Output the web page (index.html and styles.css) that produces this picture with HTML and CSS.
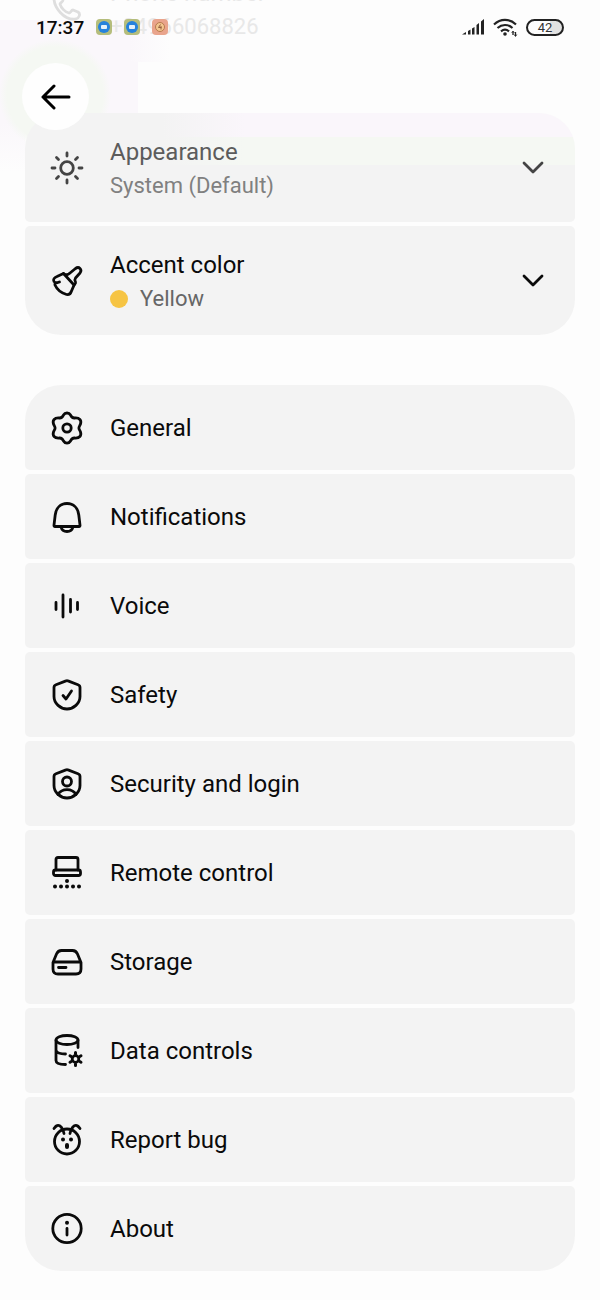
FILE: index.html
```html
<!doctype html>
<html lang="en">
<head>
<meta charset="utf-8">
<meta name="viewport" content="width=device-width, initial-scale=1">
<title>Settings</title>
<link rel="stylesheet" href="styles.css">
</head>

<body>
	<header class="topbar">
		<div class="status">
			<span class="time">17:37</span>
			<span class="apps">
				<svg width="16" height="16" viewBox="0 0 16 16"><rect width="16" height="16" rx="4" fill="#b5bd7c"/><circle cx="8" cy="8" r="6" fill="#2582dc"/><rect x="5" y="6" width="6" height="4" rx="1" fill="#e4f1fb"/></svg>
				<svg width="16" height="16" viewBox="0 0 16 16"><rect width="16" height="16" rx="4" fill="#b5bd7c"/><circle cx="8" cy="8" r="6" fill="#2582dc"/><rect x="5" y="6" width="6" height="4" rx="1" fill="#e4f1fb"/></svg>
				<svg width="16" height="16" viewBox="0 0 16 16"><rect width="16" height="16" rx="4" fill="#e9a48c"/><circle cx="8" cy="8" r="4.500" fill="#f3c58f" stroke="#b77a4d"/><path d="M8.500 5.500 6.500 8.500h3M9 7v3.500" fill="none" stroke="#95603f"/></svg>
			</span>
			<span class="signals">
				<svg width="24" height="18" viewBox="0 0 24 18" fill="#222"><path d="M1 16.500 5 14v2.500zM7 13l2.500-1.500v5H7zM11 10.500l2.500-1.500v7.500H11zM15.500 7l2.500-2v11.500h-2.500zM20 3.500 23 1v15.500h-3z"/></svg>
				<svg width="25" height="19" viewBox="0 0 25 19" fill="none" stroke="#222" stroke-width="2.200"><path d="M1 6.500C7.500.3 16.500.3 23 6.500M4.500 10c4.500-4 10.500-4 15 0M8 13.300c2.500-2 5.500-2 8 0"/><circle cx="12" cy="16" r="1.800" fill="#222" stroke="none"/><path d="M20 13.500v3.500M22.500 14v4" stroke-width="1.300"/><path d="m18.700 15 1.300-2 1.300 2M21.200 16.500l1.300 2 1.300-2" stroke-width=".8"/></svg>
				<span class="battery">42</span>
			</span>
		</div>
		<button class="back" aria-label="Back">
			<svg width="30" height="26" viewBox="0 0 30 26"><path d="M28 13H2M13 2 2 13l11 11"/></svg>
		</button>
	</header>

	<main class="settings">
		<section class="account">
			<svg class="icon" viewBox="0 0 32 32"><path d="M3 5c1-3 6-4 7-1l2 5c0 2-3 3-3 4 1 4 5 8 9 9 2 0 2-3 4-3l5 2c3 2 1 6-2 7C14 30 2 17 3 5z"/></svg>
			<div class="text">
				<span class="label">Phone number</span>
				<span class="value">+84966068826</span>
			</div>
		</section>

		<ul class="group">
			<li><button class="row tall fading">
				<svg class="icon" viewBox="0 0 32 32"><circle cx="16" cy="16" r="6.300"/><path d="M16 1v3M16 28v3M1 16h3M28 16h3M5.500 5.500l2 2M24.500 24.500l2 2M5.500 26.500l2-2M24.500 7.500l2-2"/></svg>
				<span class="text">
					<span class="label">Appearance</span>
					<span class="value">System (Default)</span>
				</span>
				<svg class="chevron" viewBox="0 0 22 14"><path d="m2 2 9 9 9-9"/></svg>
			</button></li>
			<li><button class="row tall">
				<svg class="icon" viewBox="0 0 32 32"><path d="M12.500 8.500c2 1.500 4.500 1.500 6.500-.5l5.500-4.500c3.500-2.500 7 1 4.500 4.500L24.500 13c-1 1.500-1 2.500 0 4 .6 1.200-.5 2-1.500 3.200L20.500 26c-1 3-2.500 4-5 3.500-5-1.500-9.500-5-11.500-9.500-.5-1.500.5-2 1.500-2.200L8.500 17c-2 .7-4.500 1-5.500-.5-1.200-2 .2-4 3-5z"/><path d="M12.500 8.500 23 20"/></svg>
				<span class="text">
					<span class="label">Accent color</span>
					<span class="value"><i class="dot"></i>Yellow</span>
				</span>
				<svg class="chevron" viewBox="0 0 22 14"><path d="m2 2 9 9 9-9"/></svg>
			</button></li>
		</ul>

		<ul class="group">
			<li><a class="row" href="#general">
				<svg class="icon" viewBox="0 0 32 32"><path d="M12.500 3c1.500-2.700 5.500-2.700 7 0 1 2.400 2.500 3.200 4.500 3 4.500-.3 6.700 2.300 5.500 6-.5 1.500-1.600 2.500-1.600 4s1.100 2.500 1.600 4c1.200 3.700-1 6.300-5.500 6-2-.2-3.500.6-4.500 3-1.500 2.700-5.500 2.700-7 0-1-2.400-2.500-3.200-4.500-3-4.500.3-6.700-2.300-5.500-6 .5-1.500 1.600-2.500 1.600-4S3 13.500 2.500 12C1.300 8.300 3.500 5.700 8 6c2 .2 3.500-.6 4.500-3z"/><circle cx="16" cy="16" r="4.200"/></svg>
				<span class="label">General</span>
			</a></li>
			<li><a class="row" href="#notifications">
				<svg class="icon" viewBox="0 0 32 32"><path d="M4 25.500c-.8 0-1.100-.5-1-1.300L4.200 14C5 7 9.500 2.500 16 2.500S27 7 27.800 14L29 24.200c.1.800-.2 1.300-1 1.300z"/><path d="M10 26c1.500 6 10.500 6 12 0"/></svg>
				<span class="label">Notifications</span>
			</a></li>
			<li><a class="row" href="#voice">
				<svg class="icon" viewBox="0 0 32 32"><path d="M5 12.500v7M12 5v22M19.500 9.500v12.500M26.500 12.500v7"/></svg>
				<span class="label">Voice</span>
			</a></li>
			<li><a class="row" href="#safety">
				<svg class="icon" viewBox="0 0 32 32"><path d="M15 1.900q1-.5 2 0l10 3.800Q29 6.500 29 8.500v9c0 7-6.500 12.500-13 12.500S3 24.500 3 17.500v-9q0-2 2-2.800z"/><path d="m12 16.500 3 3.500 5.500-8"/></svg>
				<span class="label">Safety</span>
			</a></li>
			<li><a class="row" href="#security">
				<svg class="icon" viewBox="0 0 32 32"><path d="M15 1.900q1-.5 2 0l10 3.800Q29 6.500 29 8.500v9c0 7-6.500 12.500-13 12.500S3 24.500 3 17.500v-9q0-2 2-2.800z"/><circle cx="16" cy="13.500" r="4.500"/><path d="M7 26.500c4-6.500 14-6.500 18 0"/></svg>
				<span class="label">Security and login</span>
			</a></li>
			<li><a class="row" href="#remote">
				<svg class="icon" viewBox="0 0 32 32"><path d="M5 13V2.500Q5 .5 7 .5h18q2 0 2 2V13"/><rect x="2.500" y="13" width="27" height="5.500" rx="2"/><path class="dots" d="M16 24h.01M4 29.500h.01M10 29.500h.01M16 29.500h.01M22 29.500h.01M28 29.500h.01"/></svg>
				<span class="label">Remote control</span>
			</a></li>
			<li><a class="row" href="#storage">
				<svg class="icon" viewBox="0 0 32 32"><path d="M2 16.500 5.500 8Q7 4.500 10.500 4.500h11q3.500 0 5 3.500L30 16.500V23q0 5-5 5H7q-5 0-5-5zM2.500 16h27M7.500 21.500H15"/></svg>
				<span class="label">Storage</span>
			</a></li>
			<li><a class="row" href="#data">
				<svg class="icon" viewBox="0 0 32 32"><ellipse cx="16" cy="5" rx="11" ry="4.500"/><path d="M5 5.500v20c0 2.500 4 4 9.500 4M27 5.500v7M5 15.500c1 2.500 5 3.500 9.500 3.500"/><circle cx="24.500" cy="24" r="3.300"/><path class="teeth" d="M24.500 19v-1.500M24.500 29v1.500M20.200 21.500l-1.200-.7M28.800 26.500l1.200.7M20.200 26.500l-1.200.7M28.800 21.500l1.200-.7"/></svg>
				<span class="label">Data controls</span>
			</a></li>
			<li><a class="row" href="#bug">
				<svg class="icon" viewBox="0 0 32 32"><circle cx="16" cy="17.500" r="12.500"/><path d="M13 9.500C12 4 9 1 6.500 1.500 5 1.700 4 3 3 4.500M19 9.500c1-5.500 4-8.500 6.500-8C27 1.700 28 3 29 4.500"/><path class="dots" d="M12 15.500h.01M20 15.500h.01M16 21v2"/></svg>
				<span class="label">Report bug</span>
			</a></li>
			<li><a class="row" href="#about">
				<svg class="icon" viewBox="0 0 32 32"><circle cx="16" cy="15.500" r="14.200"/><path d="M16 15.500v6.500"/><path class="dots" d="M16 9.700h.01"/></svg>
				<span class="label">About</span>
			</a></li>
		</ul>
	</main>
</body>
</html>
```
FILE: styles.css
```css
*{
	box-sizing:border-box;
	margin:0;
	padding:0;
}
body{
	position:relative;
	background:#fdfdfd;
	color:#0a0a0a;
	font-family:Roboto, "Liberation Sans", sans-serif;
	font-size:24px;
	overflow-x:hidden;
}
ul{
	list-style:none;
}
svg{
	display:block;
	flex:none;
}

/* status bar and back button float over the list */
.topbar{
	position:absolute;
	top:0;
	left:0;
	width:100%;
	padding:13px 36px 0 22px;
	z-index:1;
}
.status{
	display:flex;
	align-items:center;
	height:28px;
	padding-left:14px;
}
.time{
	font-size:19px;
	font-weight:500;
}
.apps{
	display:flex;
	gap:12px;
	margin-left:12px;
}
.signals{
	display:flex;
	align-items:center;
	gap:8px;
	margin-left:auto;
}
.battery{
	width:38px;
	height:17px;
	border:2px solid #222;
	border-radius:9px;
	background:linear-gradient(90deg, #fdfdfd 65%, #e2e2e2 65%);
	color:#333;
	font-size:13px;
	line-height:13px;
	text-align:center;
}
.back{
	display:flex;
	align-items:center;
	justify-content:center;
	width:67px;
	height:67px;
	margin-top:22px;
	border:0;
	border-radius:50%;
	background:#fefefe;
}
.back svg{
	fill:none;
	stroke:#000;
	stroke-width:3;
	stroke-linecap:round;
	stroke-linejoin:round;
}

.settings{
	padding:0 25px 30px;
	background:
		radial-gradient(circle at 55px 95px, #f5f8f3 48px, transparent 56px),
		linear-gradient(90deg, #faf7fb 130px, transparent 170px) 0 20px / 100% 42px no-repeat,
		linear-gradient(#faf7fb, #faf7fb) 0 62px / 138px 60px no-repeat,
		linear-gradient(#faf7fb, transparent) 0 122px / 25px 50px no-repeat;
}
.account{
	display:flex;
	align-items:flex-end;
	gap:27px;
	height:113px;
	padding:0 26px 70px;
	overflow:hidden;
	color:#e8e8e8;
}
.account .icon{
	margin-bottom:20px;
	stroke:#dedede;
}
.account .value{
	color:#e8e8e8;
}

.group{
	display:grid;
	gap:4px;
}
.group + .group{
	margin-top:50px;
}
.row{
	display:flex;
	align-items:center;
	gap:27px;
	width:100%;
	min-height:85px;
	padding:0 31px 0 26px;
	border:0;
	border-radius:5px;
	background:#f3f3f3;
	color:inherit;
	font:inherit;
	text-align:left;
	text-decoration:none;
}
.tall{
	min-height:109px;
}
.group li:first-child .row{
	border-top-left-radius:36px;
	border-top-right-radius:36px;
}
.group li:last-child .row{
	border-bottom-left-radius:36px;
	border-bottom-right-radius:36px;
}
.text{
	display:flex;
	flex-direction:column;
	flex:1;
	padding-top:2px;
}
.label{
	line-height:34px;
}
.value{
	display:flex;
	align-items:center;
	color:#666;
	font-size:22px;
	line-height:33px;
}
.dot{
	width:18px;
	height:18px;
	margin-right:12px;
	border-radius:50%;
	background:#f6c443;
}
.icon{
	width:32px;
	height:32px;
	overflow:visible;
	fill:none;
	stroke:#0a0a0a;
	stroke-width:2.8;
	stroke-linecap:round;
	stroke-linejoin:round;
}
.dots{
	stroke-width:4;
}
.teeth{
	stroke-width:3;
}
.chevron{
	width:22px;
	height:14px;
	fill:none;
	stroke:#0a0a0a;
	stroke-width:2.8;
	stroke-linecap:round;
	stroke-linejoin:round;
}

/* row sliding under the top bar */
.fading{
	background:linear-gradient(90deg, #f3f3f3 25%, transparent 40%), linear-gradient(#faf6fb 24px, #f5f8f3 24px, #f5f8f3 52px, #f3f3f3 52px);
	color:#5c5c5c;
}
.fading .value{
	color:#808080;
}
.fading .icon,
.fading .chevron{
	stroke:#444;
}
```
